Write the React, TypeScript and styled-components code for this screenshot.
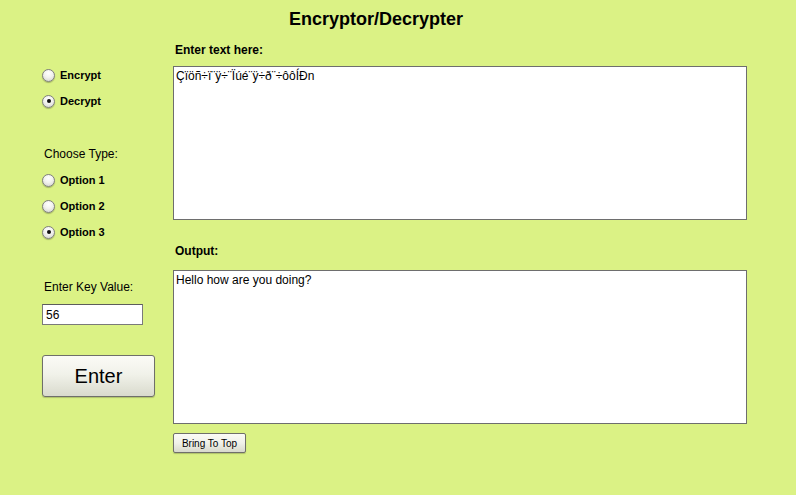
import React from "react";
import styled, { createGlobalStyle } from "styled-components";

const GlobalStyle = createGlobalStyle`
  html, body {
    margin: 0;
    padding: 0;
    background: #dbf285;
  }
  body {
    font-family: "Liberation Sans", Arial, Helvetica, sans-serif;
    color: #000;
  }
  * { box-sizing: border-box; }
`;

const Page = styled.div`
  width: 796px;
  height: 495px;
  background: #dbf285;
  padding-top: 9px;
`;

const Title = styled.h1`
  margin: 0;
  width: 752px;
  text-align: center;
  font-size: 18px;
  line-height: 21px;
  font-weight: bold;
`;

const Main = styled.div`
  display: grid;
  grid-template-columns: 173px 574px;
  margin-top: 12px;
`;

const LeftColumn = styled.div`
  display: flex;
  flex-direction: column;
  padding-left: 42px;
  padding-top: 20px;
`;

const RightColumn = styled.div`
  display: flex;
  flex-direction: column;
`;

const RadioGroup = styled.div<{ $mt?: number }>`
  display: flex;
  flex-direction: column;
  margin-top: ${(p) => p.$mt ?? 0}px;
`;

const RadioRow = styled.label`
  display: flex;
  align-items: center;
  height: 26px;
  font-size: 11px;
  font-weight: bold;
  gap: 5px;
`;

const Radio = styled.input.attrs({ type: "radio" })`
  appearance: none;
  -webkit-appearance: none;
  margin: 0;
  width: 13px;
  height: 13px;
  border-radius: 50%;
  border: 1px solid #7f7f7f;
  background: radial-gradient(circle at 50% 30%, #ffffff 0%, #f2f2ee 45%, #cfcfca 100%);
  box-shadow: 0 1px 1px rgba(0, 0, 0, 0.25);
  position: relative;
  flex: none;
  &:checked::after {
    content: "";
    position: absolute;
    left: 3.5px;
    top: 3.5px;
    width: 4px;
    height: 4px;
    border-radius: 50%;
    background: #111;
  }
`;

const PlainLabel = styled.div<{ $mt?: number; $mb?: number }>`
  font-size: 12px;
  line-height: 16px;
  padding-left: 2px;
  margin-top: ${(p) => p.$mt ?? 0}px;
  margin-bottom: ${(p) => p.$mb ?? 0}px;
`;

const KeyInput = styled.input`
  width: 101px;
  height: 21px;
  margin: 9px 0 0 0;
  padding: 0 3px;
  border: 1px solid #7a7a7a;
  border-top-color: #5c5c5c;
  background: #fff;
  font-family: "Liberation Sans", Arial, sans-serif;
  font-size: 12px;
  outline: none;
`;

const BigButton = styled.button`
  width: 113px;
  height: 42px;
  margin-top: 30px;
  border: 1px solid #6f6f6a;
  border-radius: 3px;
  background: linear-gradient(#fbfbf6 0%, #f1f2ea 45%, #d9dacd 100%);
  box-shadow: 0 1px 1px rgba(0, 0, 0, 0.2);
  font-family: "Liberation Sans", Arial, sans-serif;
  font-size: 20px;
  color: #000;
  padding: 0;
`;

const BoldLabel = styled.div<{ $mt?: number }>`
  font-size: 12px;
  line-height: 16px;
  font-weight: bold;
  padding-left: 2px;
  margin-top: ${(p) => p.$mt ?? 0}px;
`;

const TextBox = styled.textarea<{ $mt?: number }>`
  display: block;
  width: 574px;
  height: 154px;
  margin: ${(p) => p.$mt ?? 0}px 0 0 0;
  padding: 2px 2px;
  border: 1px solid #6e6e6e;
  background: #fff;
  resize: none;
  font-family: "Liberation Sans", Arial, sans-serif;
  font-size: 12px;
  line-height: 14px;
  color: #000;
  outline: none;
`;

const SmallButton = styled.button`
  align-self: flex-start;
  width: 73px;
  height: 20px;
  margin-top: 9px;
  padding: 0;
  border: 1px solid #6f6f6a;
  border-radius: 2px;
  background: linear-gradient(#fbfbf6 0%, #f0f1e9 50%, #d8d9cc 100%);
  box-shadow: 0 1px 1px rgba(0, 0, 0, 0.2);
  font-family: "Liberation Sans", Arial, sans-serif;
  font-size: 10px;
  color: #000;
`;

export default function App() {
  return (
    <>
      <GlobalStyle />
      <Page>
        <Title>Encryptor/Decrypter</Title>
        <Main>
          <LeftColumn>
            <RadioGroup>
              <RadioRow>
                <Radio name="mode" value="encrypt" />
                Encrypt
              </RadioRow>
              <RadioRow>
                <Radio name="mode" value="decrypt" defaultChecked />
                Decrypt
              </RadioRow>
            </RadioGroup>
            <PlainLabel $mt={32} $mb={5}>Choose Type:</PlainLabel>
            <RadioGroup>
              <RadioRow>
                <Radio name="type" value="1" />
                Option 1
              </RadioRow>
              <RadioRow>
                <Radio name="type" value="2" />
                Option 2
              </RadioRow>
              <RadioRow>
                <Radio name="type" value="3" defaultChecked />
                Option 3
              </RadioRow>
            </RadioGroup>
            <PlainLabel $mt={34}>Enter Key Value:</PlainLabel>
            <KeyInput defaultValue="56" />
            <BigButton>Enter</BigButton>
          </LeftColumn>
          <RightColumn>
            <BoldLabel>Enter text here:</BoldLabel>
            <TextBox $mt={8} defaultValue="Çïöñ÷ï¨ÿ÷¨Ïúé¨ÿ÷ð¨÷ôôÍÐn" />
            <BoldLabel $mt={23}>Output:</BoldLabel>
            <TextBox $mt={11} defaultValue="Hello how are you doing?" readOnly />
            <SmallButton>Bring To Top</SmallButton>
          </RightColumn>
        </Main>
      </Page>
    </>
  );
}
